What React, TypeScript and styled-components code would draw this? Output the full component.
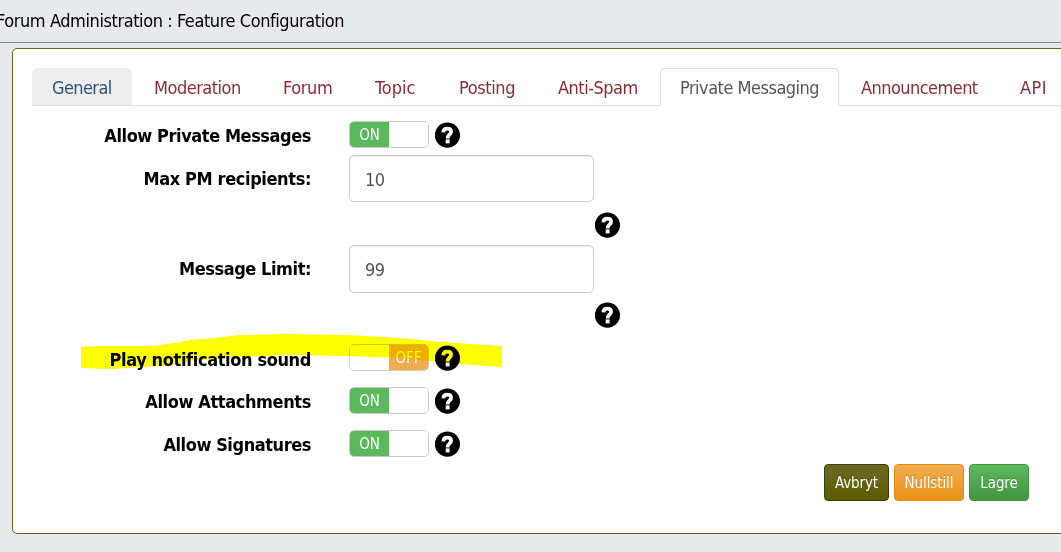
import React from "react";
import styled, { createGlobalStyle } from "styled-components";

const GlobalStyle = createGlobalStyle`
  * { box-sizing: border-box; }
  body {
    margin: 0;
    background: #e8e9ed;
    overflow: hidden;
    font-family: "DejaVu Sans Condensed", "DejaVu Sans", sans-serif;
    font-stretch: condensed;
    font-size: 18px;
    color: #000;
  }
`;

const Page = styled.div`
  position: relative;
  width: 1061px;
  height: 552px;
  overflow: hidden;
`;

const Header = styled.header`
  height: 43px;
  padding-top: 9px;
  border-bottom: 1px solid #85868b;
  line-height: 24px;
  white-space: nowrap;
  letter-spacing: -0.42px;
  text-indent: -4px;
`;

const Panel = styled.main`
  width: 1080px;
  height: 486px;
  margin: 5px 0 0 12px;
  padding: 19px 0 0 19px;
  background: #fff;
  border: 1px solid #64651a;
  border-radius: 5px;
`;

const Tabs = styled.nav`
  display: flex;
  gap: 2px;
  height: 38px;
  border-bottom: 1px solid #ddd;
`;

const Tab = styled.a<{ $width: number; $spacing?: number; $state?: "hover" | "active" }>`
  flex: none;
  width: ${(p) => p.$width}px;
  height: ${(p) => (p.$state === "active" ? 38 : 37)}px;
  padding-left: 19px;
  border: 1px solid transparent;
  border-radius: 5px 5px 0 0;
  line-height: 38px;
  white-space: nowrap;
  letter-spacing: ${(p) => p.$spacing ?? -0.5}px;
  color: #8b2b35;
  ${(p) => p.$state === "hover" && "background: #eee; color: #2a5078;"}
  ${(p) =>
    p.$state === "active" &&
    "background: #fff; color: #555; border-color: #ddd; border-bottom-color: #fff;"}
`;

const Form = styled.form`
  padding-top: 15px;
`;

const Row = styled.div<{ $height: number }>`
  display: flex;
  align-items: flex-start;
  height: ${(p) => p.$height}px;
`;

const Label = styled.label<{ $top?: number; $spacing?: number }>`
  width: 279px;
  margin-right: 38px;
  padding-top: ${(p) => p.$top ?? 3}px;
  line-height: 24px;
  font-weight: bold;
  text-align: right;
  white-space: nowrap;
  letter-spacing: ${(p) => p.$spacing ?? -0.43}px;
`;

const Switch = styled.div`
  display: flex;
  width: 80px;
  height: 27px;
  margin-right: 6px;
  border: 1px solid #ccc;
  border-radius: 5px;
  overflow: hidden;
`;

const SwitchHalf = styled.span<{ $tone?: "on" | "off" }>`
  width: 39px;
  line-height: 26px;
  font-size: 15px;
  letter-spacing: -0.1px;
  text-align: center;
  color: #fff;
  background: ${(p) => (p.$tone === "on" ? "#5cb85c" : p.$tone === "off" ? "#f0ad4e" : "#fff")};
`;

const Input = styled.input<{ $height: number }>`
  width: 245px;
  height: ${(p) => p.$height}px;
  margin-right: 1px;
  padding: 1px 15px 0;
  border: 1px solid #ccc;
  border-radius: 5px;
  box-shadow: inset 0 1px 1px rgba(0, 0, 0, 0.075);
  font: inherit;
  letter-spacing: -0.5px;
  color: #555;
  background: #fff;
  outline: none;
`;

const HelpSvg = styled.svg<{ $top: number }>`
  flex: none;
  width: 26px;
  height: 26px;
  margin-top: ${(p) => p.$top}px;
`;

const Actions = styled.div`
  display: flex;
  align-items: flex-start;
  gap: 5px;
  margin-top: -9px;
  margin-left: 792px;
`;

const Button = styled.button<{ $width: number; $from: string; $to: string; $edge: string }>`
  width: ${(p) => p.$width}px;
  height: 37px;
  padding: 0;
  border: 1px solid ${(p) => p.$edge};
  border-radius: 4px;
  background: linear-gradient(${(p) => p.$from}, ${(p) => p.$to});
  color: #fff;
  font: inherit;
  font-size: 15px;
  letter-spacing: -0.1px;
  text-shadow: 0 -1px 0 rgba(0, 0, 0, 0.2);
`;

const Marker = styled.svg`
  position: absolute;
  left: 81px;
  top: 334px;
  width: 421px;
  height: 36px;
  mix-blend-mode: multiply;
  pointer-events: none;
`;

const Help = ({ top = 1 }: { top?: number }) => (
  <HelpSvg $top={top} viewBox="0 0 26 26">
    <circle cx="12.4" cy="13.1" r="12.6" />
    <path
      d="M8.300 10.300C8.500 7.500 10.200 6.600 12.300 6.600C14.900 6.600 16.100 8 16.100 9.700C16.100 12.500 12.600 12.300 12.600 16.400"
      fill="none"
      stroke="#fff"
      strokeWidth="3.7"
    />
    <path d="M10.700 17.400h3.900v4h-3.900z" fill="#fff" />
  </HelpSvg>
);

const Toggle = ({ on }: { on: boolean }) => (
  <Switch>
    <SwitchHalf $tone={on ? "on" : undefined}>{on ? "ON" : ""}</SwitchHalf>
    <SwitchHalf $tone={on ? undefined : "off"}>{on ? "" : "OFF"}</SwitchHalf>
  </Switch>
);

export default function App() {
  return (
    <Page>
      <GlobalStyle />
      <Header>Forum Administration : Feature Configuration</Header>
      <Panel>
        <Tabs>
          <Tab $width={100} $spacing={-0.6} $state="hover">General</Tab>
          <Tab $width={127}>Moderation</Tab>
          <Tab $width={90} $spacing={-0.4}>Forum</Tab>
          <Tab $width={82} $spacing={0}>Topic</Tab>
          <Tab $width={97} $spacing={-0.4}>Posting</Tab>
          <Tab $width={120}>Anti-Spam</Tab>
          <Tab $width={179} $state="active">Private Messaging</Tab>
          <Tab $width={157} $spacing={-0.55}>Announcement</Tab>
          <Tab $width={90} $spacing={0.5}>API</Tab>
        </Tabs>
        <Form>
          <Row $height={34}>
            <Label>Allow Private Messages</Label>
            <Toggle on />
            <Help />
          </Row>
          <Row $height={90}>
            <Label $top={12} $spacing={-0.38}>Max PM recipients:</Label>
            <Input $height={47} defaultValue="10" />
            <Help top={57} />
          </Row>
          <Row $height={99}>
            <Label $top={12}>Message Limit:</Label>
            <Input $height={48} defaultValue="99" />
            <Help top={57} />
          </Row>
          <Row $height={43}>
            <Label $top={4} $spacing={-0.37}>Play notification sound</Label>
            <Toggle on={false} />
            <Help />
          </Row>
          <Row $height={43}>
            <Label $spacing={-0.38}>Allow Attachments</Label>
            <Toggle on />
            <Help />
          </Row>
          <Row $height={43}>
            <Label>Allow Signatures</Label>
            <Toggle on />
            <Help />
          </Row>
          <Actions>
            <Button type="button" $width={65} $from="#6a6a25" $to="#5c5c00" $edge="#3c3c08">Avbryt</Button>
            <Button type="button" $width={70} $from="#f0ad4e" $to="#eb9316" $edge="#e38d13">Nullstill</Button>
            <Button type="button" $width={60} $from="#5cb85c" $to="#419641" $edge="#3e8f3e">Lagre</Button>
          </Actions>
        </Form>
      </Panel>
      <Marker viewBox="81 334 421 36">
        <path
          fill="#ff0"
          d="M81 347L100 346L153 346L175 343L190 340L215 338L240 335L285 334L345 335L385 337L410 339L440 342L470 344L502 346V367L460 364L440 362L400 358L345 356L285 355L240 357L190 361L165 366L140 367L112 369L81 368Z"
        />
      </Marker>
    </Page>
  );
}
